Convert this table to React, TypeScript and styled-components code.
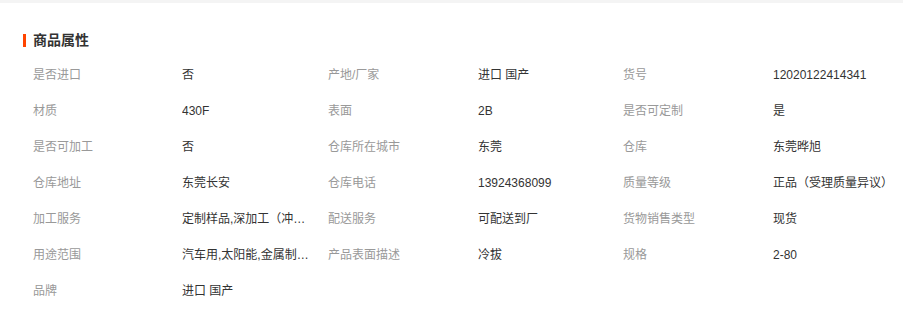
import { Fragment } from 'react';
import styled, { createGlobalStyle } from 'styled-components';

const GlobalStyle = createGlobalStyle`
  html, body {
    margin: 0;
    padding: 0;
    background: #fff;
  }
  body {
    font-family: "Liberation Sans", "Noto Sans CJK SC", sans-serif;
    font-size: 12px;
    color: #333;
  }
`;

const TopBand = styled.div`
  height: 3px;
  background: #f4f4f4;
`;

const Section = styled.section`
  padding: 27px 0 0 0;
`;

const Title = styled.h3`
  display: flex;
  align-items: center;
  gap: 7px;
  margin: 0 0 7px 23px;
  height: 20px;
  font-size: 14px;
  font-weight: bold;
  color: #333;
  line-height: 20px;

  &::before {
    content: '';
    width: 3px;
    height: 13px;
    background: #ff4400;
  }
`;

const Grid = styled.div`
  display: grid;
  grid-template-columns: 149px 146px 150px 145px 150px 1fr;
  grid-auto-rows: 36px;
  padding-left: 33px;
`;

const Label = styled.div`
  color: #999;
  line-height: 36px;
  white-space: nowrap;
`;

const Value = styled.div`
  color: #333;
  line-height: 36px;
  max-width: 129px;
  white-space: nowrap;
  overflow: hidden;
  text-overflow: ellipsis;
`;

const attrs: [string, string][] = [
  ['是否进口', '否'],
  ['产地/厂家', '进口 国产'],
  ['货号', '12020122414341'],
  ['材质', '430F'],
  ['表面', '2B'],
  ['是否可定制', '是'],
  ['是否可加工', '否'],
  ['仓库所在城市', '东莞'],
  ['仓库', '东莞晔旭'],
  ['仓库地址', '东莞长安'],
  ['仓库电话', '13924368099'],
  ['质量等级', '正品（受理质量异议）'],
  ['加工服务', '定制样品,深加工（冲压,折弯,切割）'],
  ['配送服务', '可配送到厂'],
  ['货物销售类型', '现货'],
  ['用途范围', '汽车用,太阳能,金属制品,五金'],
  ['产品表面描述', '冷拔'],
  ['规格', '2-80'],
  ['品牌', '进口 国产'],
];

function App() {
  return (
    <>
      <GlobalStyle />
      <TopBand />
      <Section>
        <Title>商品属性</Title>
        <Grid>
          {attrs.map(([label, value]) => (
            <Fragment key={label}>
              <Label>{label}</Label>
              <Value title={value}>{value}</Value>
            </Fragment>
          ))}
        </Grid>
      </Section>
    </>
  );
}

export default App;
